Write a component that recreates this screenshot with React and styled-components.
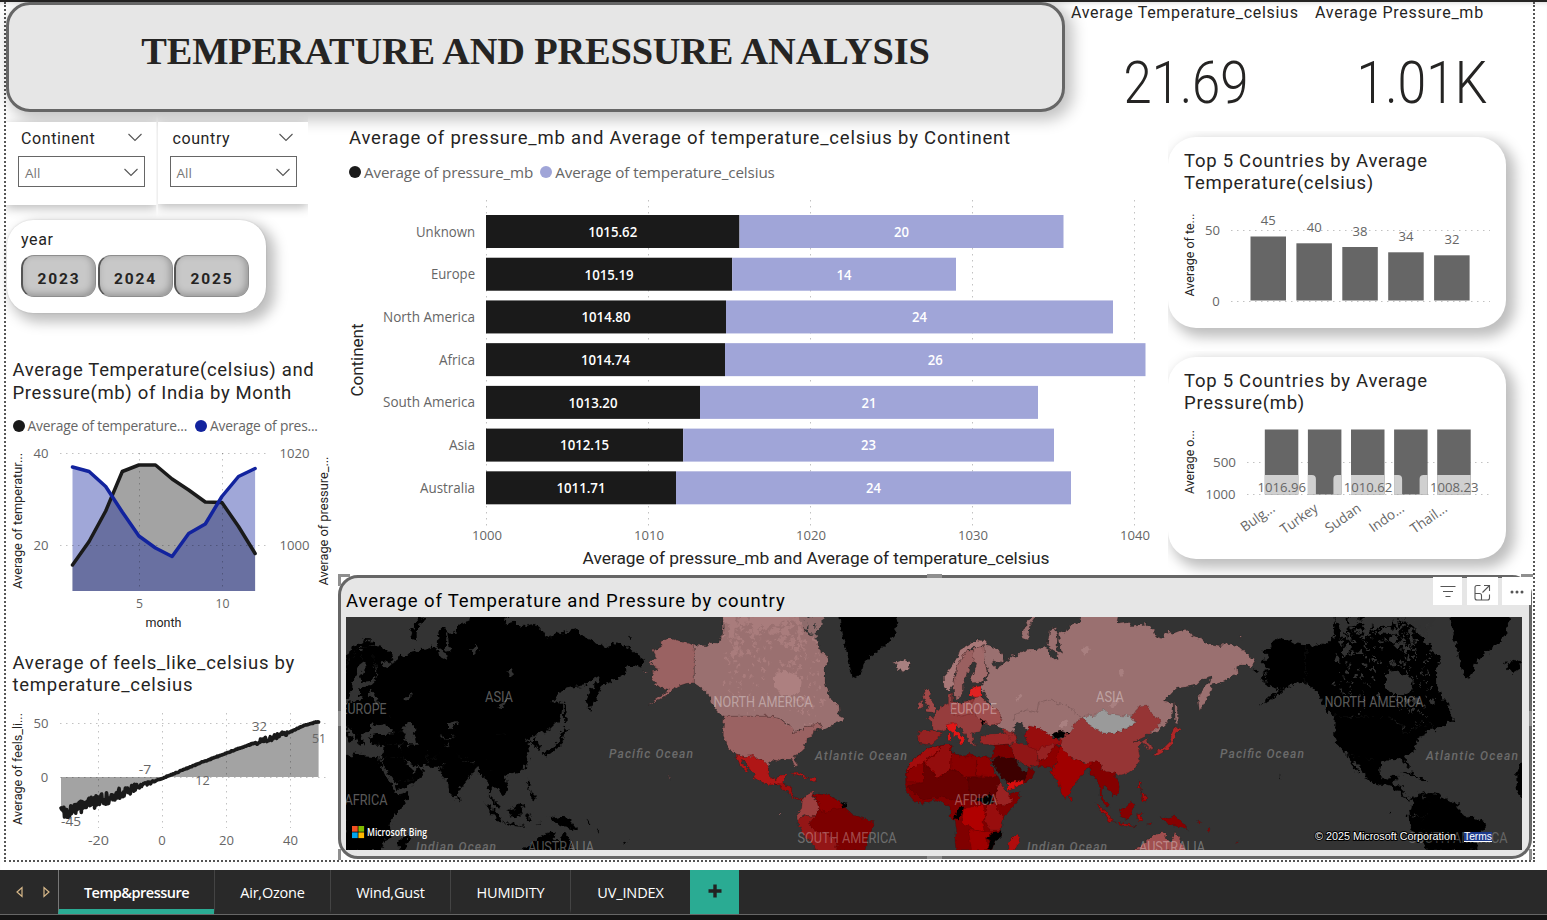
import React from 'react';
import styled, { createGlobalStyle } from 'styled-components';

const DIN = "Roboto, 'Liberation Sans', sans-serif";
const SEGOE = "'Open Sans', 'Noto Sans', sans-serif";

const Global = createGlobalStyle`
  * { box-sizing: border-box; }
  body { margin: 0; background: #fff; font-family: ${SEGOE}; overflow: hidden; }
  svg { display: block; }
`;

const Screen = styled.div`
  width: 1547px;
  height: 920px;
  display: flex;
  flex-direction: column;
  background: #fff;
  overflow: hidden;
`;
const TopEdge = styled.div`
  height: 2px;
  flex: none;
  background: #252423;
`;
const Canvas = styled.main`
  height: 868px;
  flex: none;
  padding-left: 4px;
  box-shadow: inset 0 4px 4px -3px rgba(0, 0, 0, 0.15);
`;
const Report = styled.div`
  width: 1531px;
  height: 860px;
  border: 2px dotted #555;
  border-top: none;
`;
const HeaderRow = styled.header`
  display: flex;
  height: 110px;
`;
const TitleBox = styled.div`
  width: 1059px;
  height: 110px;
  border: 3px solid #666;
  border-radius: 24px;
  background: #e6e6e6;
  box-shadow: 5px 5px 15px 3px rgba(0, 0, 0, 0.24);
  display: flex;
  justify-content: center;
  padding-top: 23px;
`;
const MainTitle = styled.h1`
  margin: 0;
  font: bold 38.4px/46px 'Liberation Serif', serif;
  letter-spacing: -0.19px;
  color: #252423;
  white-space: nowrap;
`;
const Kpi = styled.section`
  width: ${p => p.$w}px;
  padding: 1px 0 0 ${p => p.$pad}px;
`;
const KpiValue = styled.svg`
  overflow: visible;
`;
const KpiLabel = styled.div`
  font: 400 16px/20px ${DIN};
  letter-spacing: ${p => p.$ls}px;
  color: #252423;
  white-space: nowrap;
`;
const Body = styled.div`
  display: flex;
  height: 748px;
`;
const LeftCol = styled.aside`
  width: 332px;
  flex: none;
  padding-top: 10px;
  display: flex;
  flex-direction: column;
`;
const SlicerRow = styled.div`
  display: flex;
  gap: 1px;
`;
const Slicer = styled.section`
  width: 150.5px;
  height: ${p => p.$h}px;
  background: #fff;
  padding: 6px 11px 0 12px;
  box-shadow: 0 3px 10px rgba(0, 0, 0, 0.28);
  clip-path: inset(-14px 0 -14px 0);
`;
const SlicerHead = styled.div`
  display: flex;
  justify-content: space-between;
  height: 28px;
  padding: 0 4px 0 3px;
  align-items: flex-start;
  svg { margin-top: 4.5px; }
`;
const FieldLabel = styled.span`
  font: 400 16px/21px ${DIN};
  letter-spacing: 0.6px;
  color: #252423;
`;
const Dropdown = styled.div`
  height: 31px;
  width: 127px;
  border: 1.5px solid #666;
  display: flex;
  align-items: center;
  justify-content: space-between;
  padding: 2px 6px 0 6px;
  font: 400 13.5px/18px ${SEGOE};
  color: #777;
`;
const YearCard = styled.section`
  margin: 15px 0 0 1px;
  width: 259px;
  height: 93px;
  border-radius: 26px;
  background: #fff;
  padding: 8px 14px;
  box-shadow: 6px 6px 13px 3px rgba(0, 0, 0, 0.26), 0 0 2px rgba(0, 0, 0, 0.15);
`;
const YearRow = styled.div`
  display: flex;
  gap: 1.5px;
  margin-top: 5px;
`;
const YearButton = styled.button`
  width: 75px;
  height: 41.5px;
  border: 1px solid #8e8e8e;
  border-left: 2px solid #555;
  border-radius: 13px;
  background: #c8c8c8;
  box-shadow: inset -2px -2px 7px rgba(0, 0, 0, 0.26);
  font: 700 15.5px/20px ${DIN};
  letter-spacing: 1.9px;
  color: #252423;
  padding: 6px 0 0 0;
`;
const VisualTitle = styled.h2`
  margin: 0;
  font: 400 18.5px/${p => p.$lh || 22.5}px ${DIN};
  letter-spacing: ${p => p.$ls}px;
  color: ${p => p.$c || '#252423'};
  white-space: nowrap;
`;
const LeftVisual = styled.section`
  height: ${p => p.$h}px;
  margin-top: ${p => p.$mt}px;
  ${VisualTitle} { padding-left: 6.5px; }
  > svg { margin-top: ${p => p.$gap}px; }
`;
const Legend = styled.div`
  display: flex;
  align-items: center;
  height: 22px;
  padding-left: ${p => p.$pad}px;
  margin-top: ${p => p.$mt}px;
  gap: ${p => p.$gap}px;
`;
const LegendItem = styled.span`
  display: flex;
  align-items: center;
  gap: 3px;
  font: 400 ${p => p.$fs}px/22px ${SEGOE};
  letter-spacing: ${p => p.$ls}px;
  color: #666;
  white-space: nowrap;
  &::before {
    content: '';
    width: 12px;
    height: 12px;
    border-radius: 50%;
    background: ${p => p.$c};
  }
`;
const RightArea = styled.div`
  width: 1195px;
  flex: none;
`;
const UpperRow = styled.div`
  height: 463px;
  display: flex;
`;
const MainChart = styled.section`
  width: 830px;
  padding-top: 15px;
  ${VisualTitle} { padding-left: 11px; }
  > svg { margin-top: 7.5px; }
`;
const CardCol = styled.div`
  width: 338px;
  padding-top: 25px;
  display: flex;
  flex-direction: column;
  gap: 29px;
`;
const Card = styled.section`
  width: 338px;
  height: ${p => p.$h}px;
  flex: none;
  border-radius: 28px;
  background: #fff;
  padding-top: 13px;
  box-shadow: 6px 6px 13px 3px rgba(0, 0, 0, 0.26);
  clip-path: inset(-6px -30px -26px 0);
  ${VisualTitle} { padding-left: 16px; }
`;
const MapPanel = styled.section`
  position: relative;
  width: 1194px;
  height: 284px;
  border: 3px solid #666;
  border-radius: 20px;
  background: #e6e6e6;
  padding: 12px 0 0 5px;
`;
const MapFrame = styled.div`
  margin-top: 4px;
  width: 1176px;
  height: 233px;
`;
const Handle = styled.i`
  position: absolute;
  left: ${p => p.$x}px;
  top: ${p => p.$y}px;
  width: ${p => p.$w}px;
  height: ${p => p.$h}px;
  background: #8f8f8f;
`;
const VisualTools = styled.div`
  position: absolute;
  right: -2px;
  top: -1px;
  display: flex;
  gap: 4.5px;
`;
const ToolButton = styled.button`
  width: ${p => p.$w}px;
  height: 28px;
  border: none;
  padding: ${p => p.$pt || 0}px 0 0;
  background: #fff;
  display: flex;
  align-items: center;
  justify-content: center;
`;
const TabBar = styled.nav`
  height: 45px;
  flex: none;
  background: #292929;
  border-bottom: 1px solid #666;
  display: flex;
`;
const Arrows = styled.div`
  width: 58px;
  padding: 0 7px 1px 15px;
  display: flex;
  align-items: center;
  justify-content: space-between;
`;
const Tab = styled.div`
  width: ${p => p.$w}px;
  border-left: 1px solid ${p => (p.$active ? '#777' : '#444')};
  border-bottom: 5px solid ${p => (p.$active ? '#2aab93' : 'transparent')};
  display: flex;
  align-items: center;
  justify-content: center;
  padding-top: 6px;
  font: ${p => (p.$active ? 600 : 400)} 14.5px/20px ${SEGOE};
  letter-spacing: ${p => p.$ls}px;
  color: #fff;
  white-space: nowrap;
`;
const AddTab = styled.button`
  width: 49px;
  border: none;
  padding: 0 0 3px 0;
  background: #2aab93;
  display: flex;
  align-items: center;
  justify-content: center;
`;
const BottomEdge = styled.div`
  flex: 1;
  background: #141414;
`;

/* Chart text; w stretches the string to a known axis width */
const T = ({ x, y, w, s = 13.4, f = SEGOE, c = '#666', a = 'middle', wt = 400, rot, children }) => (
  <text
    x={x} y={y} fontSize={s} fontFamily={f} fill={c} textAnchor={a} fontWeight={wt}
    textLength={w} lengthAdjust="spacingAndGlyphs"
    transform={rot ? `rotate(${rot} ${x} ${y})` : undefined}
  >{children}</text>
);
const Grid = ({ d }) => <path d={d} stroke="#000" strokeOpacity=".24" strokeWidth="1" strokeDasharray="1.5 4.5" fill="none" />;
const Chevron = () => (
  <svg width="14" height="9" viewBox="0 0 14 9"><path d="M.5 1 7 7.5 13.5 1" fill="none" stroke="#555" strokeWidth="1.1" /></svg>
);

const BARS = [
  ['Unknown', 59, '1015.62', 739.5, '20', 1063.5],
  ['Europe', 44, '1015.19', 732.2, '14', 956],
  ['North America', 92, '1014.80', 726, '24', 1113],
  ['Africa', 36, '1014.74', 725, '26', 1145.5],
  ['South America', 92, '1013.20', 700, '21', 1038],
  ['Asia', 26, '1012.15', 683.2, '23', 1054],
  ['Australia', 55, '1011.71', 676, '24', 1071],
];

const ContinentChart = () => (
  <svg width="830" height="385" viewBox="338 190 830 385">
    <Grid d="M486.5 200V526M648.5 200V526M810.5 200V526M972.5 200V526M1134.5 200V526" />
    {BARS.map(([n, w, v1, x1, v2, x2], i) => {
      const y = 215 + i * 42.72;
      return (
        <g key={n}>
          <rect x="486" y={y} width={x1 - 486} height="33" fill="#1a1a1a" />
          <rect x={x1} y={y} width={x2 - x1} height="33" fill="#a0a5d8" />
          <T x={475} y={y + 21.6} w={w} a="end" s={14}>{n}</T>
          <T x={(486 + x1) / 2} y={y + 21.8} w={49} c="#fff" wt={600}>{v1}</T>
          <T x={(x1 + x2) / 2} y={y + 21.8} w={15} c="#fff" wt={600}>{v2}</T>
        </g>
      );
    })}
    {[1000, 1010, 1020, 1030, 1040].map((v, i) => <T key={v} x={487 + i * 162} y={540} w={30}>{v}</T>)}
    <T x={363} y={360} w={73} s={16} f={DIN} c="#252423" rot={-90}>Continent</T>
    <T x={816} y={564} w={467} s={16} f={DIN} c="#252423">Average of pressure_mb and Average of temperature_celsius</T>
  </svg>
);

const MONTH_X = i => 72.5 + i * 16.6;
const TEMP = [565, 541.5, 511, 471.5, 465, 465, 479, 490, 502, 502.5, 526.5, 553.5];
const PRES = [467, 471.5, 486.5, 512, 536, 548, 556.5, 533.5, 524, 496.5, 476.5, 468.5];
const line = ys => ys.map((y, i) => `${i ? 'L' : 'M'}${MONTH_X(i)} ${y}`).join('');
const area = ys => `${line(ys)}V591H72.5Z`;

const MonthChart = () => (
  <svg width="332" height="197" viewBox="6 440 332 197">
    <path d={area(TEMP)} fill="#1a1a1a" fillOpacity=".4" />
    <path d={area(PRES)} fill="#12239e" fillOpacity=".4" />
    <Grid d="M60 453.5H268M60 545.5H268M139.5 453V591M222.5 453V591" />
    <path d={line(TEMP)} fill="none" stroke="#1a1a1a" strokeWidth="3.5" strokeLinejoin="round" strokeLinecap="round" />
    <path d={line(PRES)} fill="none" stroke="#12239e" strokeWidth="3.5" strokeLinejoin="round" strokeLinecap="round" />
    <T x={41} y={458} w={15}>40</T>
    <T x={41} y={550} w={15}>20</T>
    <T x={294.5} y={458} w={30}>1020</T>
    <T x={294.5} y={550} w={30}>1000</T>
    <T x={139.5} y={608} w={7}>5</T>
    <T x={222.5} y={608} w={14}>10</T>
    <T x={163.5} y={627} w={36} s={12.5} f={DIN} c="#252423">month</T>
    <T x={22} y={521} w={136} s={12} f={DIN} c="#252423" rot={-90}>Average of temperatur...</T>
    <T x={328} y={521} w={129} s={12} f={DIN} c="#252423" rot={-90}>Average of pressure_...</T>
  </svg>
);

const seeded = seed => () => {
  seed = (seed * 16807) % 2147483647;
  return seed / 2147483647;
};
const FEELS = (() => {
  const r = seeded(77);
  const anchors = [[61, 814], [80, 807], [98, 801], [120, 794], [140, 786], [152, 782], [162, 778.5], [200, 763], [232, 751], [260, 741], [275, 737], [290, 732], [305, 725], [319, 721.5]];
  const pts = [];
  for (let x = 61; x <= 319; x += 0.7) {
    let k = 0;
    while (k < anchors.length - 2 && anchors[k + 1][0] < x) k++;
    const [x0, y0] = anchors[k];
    const [x1, y1] = anchors[k + 1];
    const y = y0 + ((y1 - y0) * (x - x0)) / (x1 - x0);
    const amp = x < 120 ? 6 : x < 140 ? 4 : x < 155 ? 1.5 : x > 256 && x < 288 ? 2.5 : 0.4;
    pts.push([x.toFixed(1), +(y + (r() - 0.5) * 2 * amp).toFixed(1)]);
  }
  return 'M' + pts.map(p => p.join(' ')).join('L');
})();

const FeelsChart = () => (
  <svg width="332" height="152" viewBox="6 704 332 152">
    <path d={`${FEELS}V777H61Z`} fill="#a3a3a3" />
    <Grid d="M60 723.5H330M60 777.5H330M98.5 713V828M162.5 713V828M226.5 713V828M290.5 713V828" />
    <path d={FEELS} fill="none" stroke="#1a1a1a" strokeWidth="3.6" strokeLinejoin="round" strokeLinecap="round" />
    <T x={41} y={728} w={15}>50</T>
    <T x={44.5} y={782} w={7.5}>0</T>
    <T x={98.5} y={845} w={21}>-20</T>
    <T x={162} y={845} w={7.5}>0</T>
    <T x={226.5} y={845} w={15}>20</T>
    <T x={290.5} y={845} w={15}>40</T>
    <T x={71} y={826} w={20}>-45</T>
    <T x={145} y={774} w={12.5}>-7</T>
    <T x={202.5} y={785} w={14.5}>12</T>
    <T x={259.5} y={731} w={15}>32</T>
    <T x={319} y={743} w={14}>51</T>
    <T x={22} y={769} w={112} s={12} f={DIN} c="#252423" rot={-90}>Average of feels_li...</T>
  </svg>
);

const TopTempChart = () => (
  <svg width="338" height="134" viewBox="1168 194 338 134">
    <Grid d="M1231 230.5H1490M1231 301.5H1490" />
    {[[45, 236.5], [40, 243.3], [38, 247], [34, 252.3], [32, 255.3]].map(([v, y], i) => (
      <g key={v}>
        <rect x={1250.5 + i * 45.9} y={y} width="35.5" height={300.5 - y} fill="#666" />
        <T x={1268.3 + i * 45.9} y={y - 11.5} w={15}>{v}</T>
      </g>
    ))}
    <T x={1212.5} y={235} w={15}>50</T>
    <T x={1216} y={306} w={7.5}>0</T>
    <T x={1194} y={255} w={83} s={12} f={DIN} c="#252423" rot={-90}>Average of te...</T>
  </svg>
);

const TopPressureChart = () => (
  <svg width="338" height="145" viewBox="1168 414 338 145">
    <Grid d="M1247 462.5H1490M1247 494.5H1490" />
    {[['Bulg...', '1016.96', 38], ['Turkey', null, 42], ['Sudan', '1010.62', 40], ['Indo...', null, 39], ['Thail...', '1008.23', 41]].map(([n, v, w], i) => {
      const x = 1264.8 + i * 43.1;
      return (
        <g key={n}>
          <rect x={x} y="429.5" width="33.5" height="65" fill="#666" />
          {v ? (
            <rect x={x} y="475" width="33.5" height="19.5" fill="#d0d0d0" />
          ) : (
            <path d={`M${x} 475h4q4 0 4 4V494.5h-8ZM${x + 33.5} 475h-4q-4 0 -4 4V494.5h8Z`} fill="#d0d0d0" />
          )}
          {v && <T x={x + 17} y={492} w={48.5}>{v}</T>}
          <T x={x + 11} y={510.5} w={w} a="end" rot={-35} s={13.8}>{n}</T>
        </g>
      );
    })}
    <T x={1224.5} y={467} w={23}>500</T>
    <T x={1220.5} y={499} w={30}>1000</T>
    <T x={1194} y={462} w={64} s={12} f={DIN} c="#252423" rot={-90}>Average o...</T>
  </svg>
);

/* ---- world map: outlines are stored per hemisphere at triple size ---- */
const WEST = [
  ['#9a6262', 'M28 185 50 175 38 152 65 140 62 125 88 112 105 118 125 125 163 135V248L140 250 115 258 100 268 80 285 50 303 22 316 50 296 75 280 85 268 60 262 45 250 35 235 45 222 35 215 60 208 45 203Z'],
  ['#9a7070', 'M163 135 200 137 215 128 235 130 247 105 250 85 248 45 470 45 488 75 495 95 520 112 535 135 540 150 558 165 567 180 555 200V250L565 280 575 300 597 315 598 335 592 345 610 355 612 365 590 365 575 378 550 390 535 365 520 378 500 380 480 390 462 398 455 378 440 370 415 352 395 349H252L235 335 215 312 205 285 185 265 163 250Z'],
  ['#9a6262', 'M252 349H395L415 352 440 372 455 378 462 398 480 392 500 380 520 378 535 365 545 385 525 390 522 405 502 412 500 425 493 432 495 445 480 458 462 468 465 480 472 490 473 505 463 495 455 478 425 477 415 482 400 480 388 488 385 502 372 490 365 478 352 480 340 468 315 470 290 462 272 450 258 430 250 410V380Z'],
  ['#b01414', 'M287 462 315 470 340 466 352 480 365 478 385 500V520L395 535 410 540 420 525 440 525 435 540 425 548 405 553 390 555 365 548 345 535 342 520 325 500 310 480 303 478 310 495 325 513 320 517 300 495 292 475Z'],
  ['#9c0c0c', 'M405 553 425 545 435 555 455 560 455 575 460 590 480 597 490 592 488 600 470 598 448 585 445 573 430 570 420 558Z'],
  ['#b01414', 'M452 517 475 517 500 528 505 535 485 528 460 522ZM505 535 525 535 533 541 510 543Z'],
  ['#7c0000', 'M515 585 535 580 560 582 575 592 600 605 618 625 640 645 670 655 700 665 702 680 690 700 680 725 675 752H580L525 700 510 680 508 665 525 650 538 625 535 605Z'],
  ['#8c0202', 'M515 585 535 580 560 582 575 592 602 606 606 625 580 628 560 640 538 628 535 605Z'],
  ['#9c4040', 'M490 595 505 580 520 573 515 590 535 605 538 625 525 650 505 648 490 640 485 655 472 658 470 645 485 625 487 605Z'],
  ['#941818', 'M472 658 485 655 495 645 505 648 525 650 508 668 515 685 530 695 560 700 580 715 590 730 585 752H527L522 735 495 710 485 690 475 670Z'],
  ['#000', 'M603 607 620 612 618 622 607 625Z'],
  ['#000', 'M598 45H778L765 90 770 100 745 125 725 145 690 170 672 190 665 215 650 235 638 230 630 200 622 160 605 100Z'],
  ['#a88080', 'M760 185 770 190 795 180 812 190 808 203 790 215 768 208 772 198Z'],
  ['#a04848', 'M860 265 870 275 868 290 880 305 888 325 880 337 858 335 865 320 855 305 850 285ZM835 310 848 300 850 320 833 330Z'],
  ['#a07070', 'M84 528 92 533 90 538ZM8 212 20 214 18 219ZM415 638 422 640 418 643Z'],
];
const EAST = [
  ['#9a7070', 'M310 135 340 142 365 158 372 175 362 190 340 182 335 190 350 205 365 195 385 180 395 165 410 170 425 155 445 150 465 150 478 145 490 140 505 148 510 165 520 178 535 175 530 158 508 145 503 130 510 90 525 80 532 110 530 150 545 160 540 130 535 100 560 95 570 75 600 65 605 45H715L710 70 740 65 755 80 780 75 800 72 815 85 830 110 845 115 860 95 880 100 900 92 920 88 935 105 970 120 982 132 1020 140 1030 130 1055 132 1085 145 1105 165 1128 182 1115 202 1100 195 1080 195 1070 200 1072 220 1045 235 1020 248 995 255 992 275 982 295 970 315 958 332 954 295 965 270 990 245 995 228 970 235 950 255 920 260 890 265 865 290 850 302 880 310 878 340 865 365 845 385 830 395 800 400H700L600 380 560 405 500 412 450 395 420 370 400 380 405 395 375 395 350 378 365 350 340 330 325 300 300 260 320 240 325 220 315 180Z'],
  ['#9a7070', 'M425 100 440 70 460 45 467 50 448 80 445 120 430 115ZM884 308 892 320 893 372 886 370ZM1078 108 1086 110 1082 118Z'],
  ['#a87878', 'M190 230 215 200 235 165 240 150 265 135 290 120 315 122 320 132 300 142 280 142 262 150 245 175 230 200 225 225 220 255 205 272 192 262Z'],
  ['#9a6060', 'M222 290 220 255 228 225 230 200 245 175 262 150 278 150 283 185 270 195 262 225 250 245 250 270 240 290 230 297Z'],
  ['#a06a6a', 'M278 150 290 142 312 140 315 180 322 225 305 245 280 248 270 235 285 210 290 190 283 185Z'],
  ['#963c3c', 'M140 352 160 350 178 325 205 310 205 285 215 278 215 305 240 310 272 300 285 292 303 290 325 310 345 325 365 345 360 370 330 375 308 372 300 395 275 400 280 425 290 440 270 430 255 400 240 385 225 372 200 375 198 388 183 392 160 388 155 365Z'],
  ['#a05050', 'M285 292 303 290 325 310 345 325 365 345 360 370 330 375 310 362 285 345 270 320Z'],
  ['#a04848', 'M215 305 240 310 272 300 275 340 245 348 215 340Z'],
  ['#e02020', 'M270 270 278 262 303 258 303 290 285 292 270 288Z'],
  ['#942020', 'M118 392 160 390 185 400 172 420 155 435 118 430 115 405Z'],
  ['#e01818', 'M197 375 225 368 232 380 225 388 245 408 255 415 250 422 245 432 235 430 240 420 220 400 205 388ZM203 402 211 402 210 420 204 418Z'],
  ['#9a2828', 'M300 410 330 402 370 400 410 408 408 430 345 436 305 432ZM365 388 405 398 412 420 395 425Z'],
  ['#000', 'M300 355 313 365 307 377Z'],
  ['#800000', 'M145 445 205 433 217 440 215 455 245 470 265 460 290 470 325 472 330 490 345 520 358 545 378 572 385 585 420 575 415 600 395 625 370 655 360 680 365 690V710L345 720 335 752H228L225 720 230 690 225 660 210 650V620L190 608 165 600 125 612 100 600 78 575 76 520 90 490 110 470Z'],
  ['#a41010', 'M145 445 175 437 180 450 130 485 120 500 100 500 78 520 90 490 112 470Z'],
  ['#940808', 'M180 437 210 433 215 460 212 505 175 537 130 485 178 455Z'],
  ['#880404', 'M215 455 245 470 290 470 288 530 262 535 212 505Z'],
  ['#8e0606', 'M290 470 328 472 345 520 355 530 290 528Z'],
  ['#8c0404', 'M78 522 100 500 130 487 132 545 80 545Z'],
  ['#6a0000', 'M132 490 175 537 212 505 262 535 275 600 215 600 180 590 130 600 80 560 130 545Z'],
  ['#600000', 'M262 535 355 530 365 550 345 600 275 605Z'],
  ['#9a2424', 'M350 555 365 550 385 585 400 600 375 618 345 610Z'],
  ['#b00000', 'M250 625 310 615 315 640 308 670 312 695 285 690 270 678 245 672Z'],
  ['#980c0c', 'M318 620 345 612 370 655 362 690 330 690 315 660Z'],
  ['#a00404', 'M265 690 285 690 312 695 335 700 320 715 328 752H275Z'],
  ['#000', 'M290 590 310 595 330 580 345 605 325 615 295 605ZM222 655 235 622 252 620 245 645 235 658ZM345 695 366 695 365 712 345 722 335 752 325 745 330 720 318 715Z'],
  ['#b01010', 'M385 725 400 710 415 705 418 720 405 752H388Z'],
  ['#7c0404', 'M345 436 385 432 398 450 405 475 350 470 330 480 340 465Z'],
  ['#3c0000', 'M335 485 350 470 405 475 425 510 445 520 430 540 380 548 355 515Z'],
  ['#6e0000', 'M430 540 440 518 448 502 465 515 455 535 430 550Z'],
  ['#d81010', 'M380 548 430 540 430 553 385 570Z'],
  ['#901818', 'M392 435 410 425 418 432 445 435 470 440 475 495 455 500 425 490 405 475Z'],
  ['#980810', 'M435 405 448 378 480 385 500 400 520 415 545 420 540 435 515 440 480 455 445 440Z'],
  ['#962020', 'M470 455 490 440 525 430 520 450 500 475 475 480Z'],
  ['#8c0000', 'M475 480 500 475 525 435 545 445 535 480 520 500 525 510 505 500 475 500Z'],
  ['#a00000', 'M540 440 555 450 575 475 612 490 650 480 650 495 620 505 610 520 585 550 565 585 557 597 545 580 533 540 520 528 512 510 530 495 530 475ZM568 588 575 590 577 603 570 605Z'],
  ['#963636', 'M545 415 570 395 590 365 615 350 630 370 680 400 710 400 740 385 770 365 755 350 778 318 800 315 815 345 845 360 830 385 805 400 795 410 762 425 785 425 775 445 780 470 770 500 745 518 720 525 705 520 680 520 665 505 655 485 620 490 575 475 545 445 540 430Z'],
  ['#000', 'M515 402 540 393 568 400 550 409 528 417Z'],
  ['#9a9a9a', 'M610 350 650 345 668 328 685 340 730 348 755 345 752 360 770 365 740 385 700 402 665 398 625 372Z'],
  ['#983838', 'M785 425 800 415 805 430 820 440 812 452 800 440Z'],
  ['#b02828', 'M885 380 902 388 885 400 880 430 865 445 825 468 822 460 850 445 870 425 875 400Z'],
  ['#840000', 'M630 495 650 480 662 490 665 505 690 520 705 515 710 540 718 560 715 578 700 588 690 570 672 560 665 570 665 590 685 610 690 622 678 620 660 590 660 560 645 530 630 525Z'],
  ['#a00808', 'M648 608 675 630 700 660 690 665 665 635ZM700 665 740 672 770 680 735 678ZM770 645 790 640 780 650 788 662 775 662ZM775 540 785 548 780 570 800 590 798 605 788 600 785 575 775 560ZM800 672 815 668 812 674ZM950 660 962 668 958 672ZM985 685 990 692 985 694ZM1065 728 1078 722 1070 732Z'],
  ['#860000', 'M718 630 735 625 755 605 765 612 755 640 745 658 725 650ZM840 650 860 655 885 648 905 665 925 690 895 680 870 675 850 662Z'],
  ['#a05050', 'M755 752 780 740 810 710 845 698 860 700 855 718 875 725 885 695 900 720 918 752Z'],
];
const SEAS = 'M403 375 425 365 430 378 418 388 430 405 435 430 418 432 412 410ZM315 385 335 375 345 380 372 385 365 400 330 402 308 405Z';
const HUDSON = 'M402 230 430 212 470 225 485 245 480 275 455 285 425 285 402 260Z';

const blobs = (seed, n, x0, x1, y0, y1, big) => {
  const r = seeded(seed);
  let d = '';
  for (let i = 0; i < n; i++) {
    const t = r();
    const cx = x0 + r() * (x1 - x0);
    const cy = y0 + t * t * (y1 - y0);
    const s = 2 + r() * big * (1.1 - t);
    for (let k = 0; k < 6; k++) {
      const q = s * (0.4 + r());
      d += `${k ? 'L' : 'M'}${(cx + Math.cos(k * 1.047) * q).toFixed(0)} ${(cy + Math.sin(k * 1.047) * q * 1.3).toFixed(0)}`;
    }
    d += 'Z';
  }
  return d;
};
const LAKES = blobs(911, 190, 258, 540, 50, 300, 15) + blobs(4242, 130, 250, 540, 55, 360, 6) + blobs(31, 24, 430, 560, 300, 390, 8);
const EAST_LAKES = 'M602 150 620 135 630 150 615 165ZM715 210 725 205 735 220 722 232ZM685 320 705 300 718 295 700 325ZM405 295 425 280 428 288 410 302ZM540 370 565 360 560 378 540 385Z';

const World = ({ dx, mono }) => {
  const paint = c => (mono ? '#000' : c);
  return (
    <g transform={`translate(${dx} 0)`} filter={mono ? 'url(#coast-rough)' : 'url(#coast)'}>
      <g transform="translate(640 600) scale(.33333)">
        {WEST.map(([c, d], i) => <path key={i} d={d} fill={paint(c)} stroke={mono ? '#000' : '#200'} strokeOpacity=".35" strokeWidth="1.5" />)}
        <path d={LAKES} fill={mono ? '#333' : '#ad8080'} fillOpacity={mono ? 1 : 0.75} />
        <path d={HUDSON} fill={mono ? '#333' : '#ad8080'} />
      </g>
      <g transform="translate(880 600) scale(.33333)">
        {EAST.map(([c, d], i) => <path key={i} d={d} fill={paint(c)} stroke={mono ? '#000' : '#200'} strokeOpacity=".35" strokeWidth="1.5" />)}
        <path d={SEAS} fill="#333" />
        <path d={EAST_LAKES} fill={mono ? '#333' : '#a98080'} />
        {!mono && <path d="M400 360 402 345 440 330 470 337 475 310 515 298 530 310 560 315 600 350" fill="none" stroke="#755" strokeWidth="2" />}
      </g>
    </g>
  );
};

const Place = ({ x, y, w, children, sea, o = 0.36 }) => (
  <text
    x={x} y={y} textAnchor="middle" textLength={w} lengthAdjust={sea ? 'spacing' : 'spacingAndGlyphs'} fontFamily={DIN}
    fontSize={sea ? 12 : 13.8} fontStyle={sea ? 'italic' : 'normal'} fontWeight={sea ? 500 : 400}
    fill={sea ? '#6b6b6b' : '#fff'} fillOpacity={sea ? 1 : o}
  >{children}</text>
);

const WorldMap = () => (
  <svg width="1176" height="233" viewBox="346 617 1176 233">
    <defs>
      <filter id="coast" x="-5%" y="-5%" width="110%" height="110%">
        <feTurbulence type="fractalNoise" baseFrequency=".25" numOctaves="2" seed="4" />
        <feDisplacementMap in="SourceGraphic" scale="5" xChannelSelector="R" yChannelSelector="G" />
      </filter>
      <filter id="coast-rough" x="-5%" y="-5%" width="110%" height="110%">
        <feTurbulence type="fractalNoise" baseFrequency=".22" numOctaves="2" seed="9" />
        <feDisplacementMap in="SourceGraphic" scale="8" xChannelSelector="R" yChannelSelector="G" />
      </filter>
    </defs>
    <rect x="346" y="617" width="1176" height="233" fill="#333" />
    <World dx={-611} mono />
    <World dx={611} mono />
    <World dx={0} />
    <Place x={499} y={702} w={28}>ASIA</Place>
    <Place x={363.5} y={714} w={46}>EUROPE</Place>
    <Place x={366} y={805} w={43}>AFRICA</Place>
    <Place x={561} y={852} w={66} o={0.32}>AUSTRALIA</Place>
    <Place x={763} y={707} w={99}>NORTH AMERICA</Place>
    <Place x={847} y={843} w={99} o={0.3}>SOUTH AMERICA</Place>
    <Place x={973.5} y={714} w={47}>EUROPE</Place>
    <Place x={976} y={805} w={43} o={0.32}>AFRICA</Place>
    <Place x={1110} y={702} w={28}>ASIA</Place>
    <Place x={1172} y={852} w={66} o={0.32}>AUSTRALIA</Place>
    <Place x={1374} y={707} w={99}>NORTH AMERICA</Place>
    <Place x={1458} y={843} w={99} o={0.25}>SOUTH AMERICA</Place>
    <Place x={651} y={758} w={84} sea>Pacific Ocean</Place>
    <Place x={1262} y={758} w={84} sea>Pacific Ocean</Place>
    <Place x={861} y={760} w={92} sea>Atlantic Ocean</Place>
    <Place x={1472} y={760} w={92} sea>Atlantic Ocean</Place>
    <Place x={456} y={851} w={80} sea>Indian Ocean</Place>
    <Place x={1067} y={851} w={80} sea>Indian Ocean</Place>
    <path d="M352 826h5.7v5.7h-5.7Z" fill="#f25022" />
    <path d="M358.4 826h5.7v5.7h-5.7Z" fill="#7fba00" />
    <path d="M352 832.4h5.7v5.7h-5.7Z" fill="#00a4ef" />
    <path d="M358.4 832.4h5.7v5.7h-5.7Z" fill="#ffb900" />
    <T x={367} y={836} w={60} a="start" s={10.5} c="#fff" wt={600}>Microsoft Bing</T>
    <g stroke="#000" strokeWidth="2" paintOrder="stroke">
      <T x={1315} y={840} w={141} a="start" s={11} f="'Liberation Sans', sans-serif" c="#fff">© 2025 Microsoft Corporation</T>
    </g>
    <rect x="1464" y="832" width="28" height="10" fill="#1c3a8c" />
    <T x={1464} y={840} w={28} a="start" s={11} f="'Liberation Sans', sans-serif" c="#fff">Terms</T>
    <path d="M1464 841.5h28" stroke="#fff" />
  </svg>
);

const TABS = [['Temp&pressure', 156, true, -0.5], ['Air,Ozone', 116, false, -0.2], ['Wind,Gust', 120, false, -0.2], ['HUMIDITY', 120, false, -0.1], ['UV_INDEX', 120, false, -0.1]];

export default function App() {
  return (
    <Screen>
      <Global />
      <TopEdge />
      <Canvas>
        <Report>
          <HeaderRow>
            <TitleBox><MainTitle>TEMPERATURE AND PRESSURE ANALYSIS</MainTitle></TitleBox>
            <Kpi $w={243} $pad={6}>
              <KpiLabel $ls={0.7}>Average Temperature_celsius</KpiLabel>
              <KpiValue width="230" height="84" viewBox="1071 23 230 84">
                <T x={1186} y={103} w={125} s={60} f={DIN} c="#252423" wt={300}>21.69</T>
              </KpiValue>
            </Kpi>
            <Kpi $w={220} $pad={7}>
              <KpiLabel $ls={0.75}>Average Pressure_mb</KpiLabel>
              <KpiValue width="210" height="84" viewBox="1315 23 210 84">
                <T x={1422} y={102.5} w={131} s={60} f={DIN} c="#252423" wt={300}>1.01K</T>
              </KpiValue>
            </Kpi>
          </HeaderRow>
          <Body>
            <LeftCol>
              <SlicerRow>
                {['Continent', 'country'].map((n, i) => (
                  <Slicer key={n} $h={i ? 82 : 83}>
                    <SlicerHead><FieldLabel>{n}</FieldLabel><Chevron /></SlicerHead>
                    <Dropdown>All<Chevron /></Dropdown>
                  </Slicer>
                ))}
              </SlicerRow>
              <YearCard>
                <FieldLabel>year</FieldLabel>
                <YearRow>{['2023', '2024', '2025'].map(y => <YearButton key={y}>{y}</YearButton>)}</YearRow>
              </YearCard>
              <LeftVisual $mt={46} $h={280} $gap={3}>
                <VisualTitle $ls={0.65}>Average Temperature(celsius) and<br />Pressure(mb) of India by Month</VisualTitle>
                <Legend $pad={6.5} $mt={11} $gap={8}>
                  <LegendItem $c="#1a1a1a" $fs={13.8} $ls={-0.2}>Average of temperature...</LegendItem>
                  <LegendItem $c="#12239e" $fs={13.8} $ls={-0.2}>Average of pres...</LegendItem>
                </Legend>
                <MonthChart />
              </LeftVisual>
              <LeftVisual $mt={13} $h={205} $gap={8}>
                <VisualTitle $ls={0.75} $lh={22}>Average of feels_like_celsius by<br />temperature_celsius</VisualTitle>
                <FeelsChart />
              </LeftVisual>
            </LeftCol>
            <RightArea>
              <UpperRow>
                <MainChart>
                  <VisualTitle $ls={0.8}>Average of pressure_mb and Average of temperature_celsius by Continent</VisualTitle>
                  <Legend $pad={11} $mt={11} $gap={7}>
                    <LegendItem $c="#1a1a1a" $fs={15.2} $ls={-0.12}>Average of pressure_mb</LegendItem>
                    <LegendItem $c="#a0a5d8" $fs={15.2} $ls={-0.12}>Average of temperature_celsius</LegendItem>
                  </Legend>
                  <ContinentChart />
                </MainChart>
                <CardCol>
                  <Card $h={191}>
                    <VisualTitle $lh={22} $ls={0.74}>Top 5 Countries by Average<br />Temperature(celsius)</VisualTitle>
                    <TopTempChart />
                  </Card>
                  <Card $h={202}>
                    <VisualTitle $lh={22} $ls={0.74}>Top 5 Countries by Average<br />Pressure(mb)</VisualTitle>
                    <TopPressureChart />
                  </Card>
                </CardCol>
              </UpperRow>
              <MapPanel>
                <VisualTitle $ls={0.87} $lh={23} $c="#000">Average of Temperature and Pressure by country</VisualTitle>
                <MapFrame><WorldMap /></MapFrame>
                <Handle $x={-3} $y={-4} $w={12} $h={3} />
                <Handle $x={-3} $y={-4} $w={3} $h={12} />
                <Handle $x={586} $y={-4} $w={15} $h={4} />
                <Handle $x={-3} $y={133} $w={3} $h={15} />
                <Handle $x={1188} $y={133} $w={3} $h={15} />
                <Handle $x={1180} $y={-4} $w={12} $h={3} />
                <Handle $x={-3} $y={271} $w={3} $h={11} />
                <Handle $x={586} $y={278} $w={15} $h={3} />
                <Handle $x={1188} $y={271} $w={3} $h={11} />
                <VisualTools>
                  <ToolButton $w={29}>
                    <svg width="16" height="13" viewBox="0 0 16 13"><path d="M.5 1.5h15M3 6.5h10M5.5 11.5h5" stroke="#555" strokeWidth="1.1" /></svg>
                  </ToolButton>
                  <ToolButton $w={31} $pt={3}>
                    <svg width="17" height="17" viewBox="0 0 17 17" fill="none" stroke="#555" strokeWidth="1.1">
                      <path d="M6.5 1.5H3Q1 1.5 1 3.5V14Q1 16 3 16H13.5Q15.5 16 15.5 14V10.5M1 9.5H5.5Q7.5 9.5 7.5 11.5V16M8.5 8.5 15.5 1.5M10 1.5H15.5V7" />
                    </svg>
                  </ToolButton>
                  <ToolButton $w={29} $pt={2}>
                    <svg width="14" height="4" viewBox="0 0 14 4" fill="#555"><circle cx="2" cy="2" r="1.5" /><circle cx="7" cy="2" r="1.5" /><circle cx="12" cy="2" r="1.5" /></svg>
                  </ToolButton>
                </VisualTools>
              </MapPanel>
            </RightArea>
          </Body>
        </Report>
      </Canvas>
      <TabBar>
        <Arrows>
          <svg width="9" height="12" viewBox="0 0 9 12"><path d="M7 1.5V10.5L2 6Z" fill="none" stroke="#d8b98a" strokeWidth="1.2" /></svg>
          <svg width="9" height="12" viewBox="0 0 9 12"><path d="M2 1.5V10.5L7 6Z" fill="none" stroke="#d8b98a" strokeWidth="1.2" /></svg>
        </Arrows>
        {TABS.map(([n, w, active, ls]) => <Tab key={n} $w={w} $active={active} $ls={ls}>{n}</Tab>)}
        <AddTab><svg width="14" height="14" viewBox="0 0 14 14"><path d="M7 .5V13.5M.5 7H13.5" stroke="#222" strokeWidth="3.4" /></svg></AddTab>
      </TabBar>
      <BottomEdge />
    </Screen>
  );
}
